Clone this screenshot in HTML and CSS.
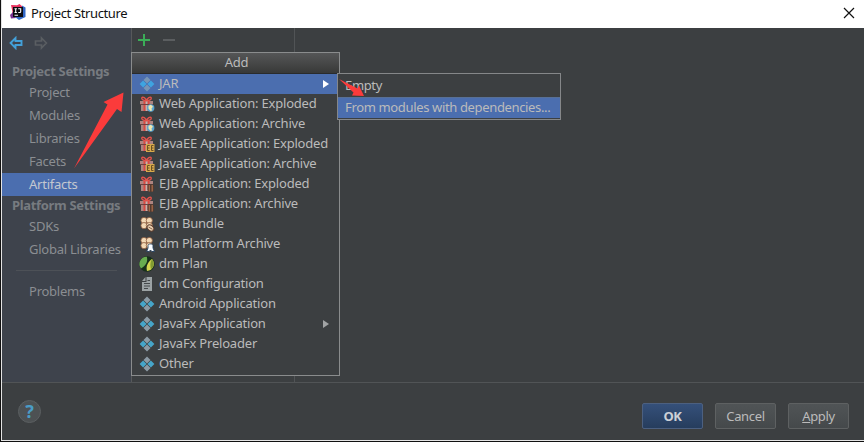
FILE: index.html
```html
<!DOCTYPE html>
<html lang="en">
<head>
<meta charset="utf-8">
<title>Project Structure</title>
<link rel="stylesheet" href="styles.css">
</head>
<body>
<svg width="0" height="0" class="defs">
  <defs>
    <symbol id="diamonds" viewBox="0 0 16 16">
      <path fill="#8c9ba5" d="M8 .6l3.500 3.500L8 7.600 4.500 4.100zM8 8.400l3.500 3.500L8 15.400l-3.500-3.500z"/>
      <path fill="#46a5c9" d="M4.100 4.500L7.600 8l-3.500 3.500L.6 8zM11.900 4.500L15.400 8l-3.500 3.500L8.400 8z"/>
    </symbol>
    <symbol id="diamonds-blue" viewBox="0 0 16 16">
      <path fill="#7795b5" d="M8 .6l3.500 3.500L8 7.600 4.500 4.100zM8 8.400l3.500 3.500L8 15.400l-3.500-3.500z"/>
      <path fill="#3fa4e0" d="M4.100 4.500L7.600 8l-3.500 3.500L.6 8zM11.900 4.500L15.400 8l-3.500 3.500L8.400 8z"/>
    </symbol>
    <symbol id="gift" viewBox="0 0 16 16">
      <path fill="#ad8480" d="M1 5h13v3H1zM2 9h11v6H2z"/>
      <path fill="#c4b3ad" d="M6.500 5h2v10h-2z"/>
      <path fill="#d84a43" d="M4.500 5h1.900v10H4.500zM8.700 5h1.900v10H8.700z"/>
      <path fill="none" stroke="#e0534c" stroke-width="1.400" d="M7.500 4.800C5 4.800 2 3.500 2.800 1.900S6.800 2 7.500 4.800C8.200 2 11.400 .2 12.200 1.900S10 4.800 7.500 4.800z"/>
      <path fill="#6e4241" d="M1 8h13v1H1z"/>
    </symbol>
    <symbol id="web" viewBox="0 0 16 16">
      <use href="#gift"/>
      <circle cx="11.700" cy="12" r="3.700" fill="#5aa5cf"/>
      <path fill="#efe6b0" d="M9.500 9.800l2.500-1 2 2-1.500 1.700.5 2-1.500.5-2-2.500z"/>
    </symbol>
    <symbol id="ee" viewBox="0 0 16 16">
      <use href="#gift"/>
      <path fill="#d7a94c" d="M7 8h8.500v8H7z"/>
      <path fill="none" stroke="#6b5125" d="M10.700 9.500H8.500v5h2.200M8.500 12h2M14.500 9.500h-2v5h2M12.500 12h2"/>
    </symbol>
    <symbol id="ejb" viewBox="0 0 16 16">
      <use href="#gift"/>
      <path fill="#513a30" d="M8.500 9.500L10 8h3.500L15 10v4.500L13.500 16H10l-1.500-2z"/>
      <path stroke="#a66c4b" stroke-width="1.300" d="M10.300 9v6.500M13.200 9v6.500"/>
    </symbol>
    <symbol id="bundle" viewBox="0 0 16 16">
      <g fill="#f3d9b6" stroke="#8d5c3d" stroke-width=".8">
        <circle cx="5" cy="4.500" r="3.100"/><circle cx="10.300" cy="4.500" r="3.100"/>
        <circle cx="5" cy="9.600" r="3.100"/><circle cx="10.300" cy="9.600" r="3.100"/>
      </g>
    </symbol>
    <symbol id="dm" viewBox="0 0 16 16">
      <use href="#bundle"/>
      <ellipse cx="11.500" cy="12" rx="3.700" ry="2.600" transform="rotate(38 11.500 12)" fill="#ead2b4" stroke="#59392a"/>
      <path fill="none" stroke="#865f45" d="M9.500 11l4 2.300"/>
    </symbol>
    <symbol id="dmplat" viewBox="0 0 16 16">
      <use href="#bundle"/>
      <path fill="#f8fbff" stroke="#233e5e" stroke-width=".9" d="M9 9.500C9 7.400 14 7.400 14 9.500v2.500l1.500 3.500h-2.700L11.500 14l-1.300 1.500H7.700L9 12z"/>
    </symbol>
    <symbol id="plan" viewBox="0 0 16 16">
      <circle cx="8" cy="8" r="7.700" fill="#17301a"/>
      <path fill="#68ad50" d="M7.800 .8A7.200 7.200 0 0 0 2 12.500C5.500 10.500 9.500 6.500 7.800 .8z"/>
      <path fill="#d5d650" d="M13 3C9.500 5.500 6.500 10 8 15A7.200 7.200 0 0 0 13 3z"/>
      <path fill="#829c32" d="M13 3C11 6 11 10 12 13.500A7.200 7.200 0 0 0 13 3z"/>
    </symbol>
    <symbol id="doc" viewBox="0 0 16 16">
      <path fill="#9ca3a5" d="M7.500 1H13v14H3V6h4.500zM6.500 1v4H3z"/>
      <path stroke="#44494b" stroke-width="1" d="M8.500 4.500H11M5 7.500h6M5 10h6M5 12.500h4"/>
    </symbol>
  </defs>
</svg>
<div class="window">
  <header class="titlebar">
    <svg class="logo" width="16" height="16" viewBox="0 0 16 16">
      <path fill="#e9315f" d="M1 1l6 .3L9.500 0 13 3l-6 9-6 2L2.500 8z"/>
      <path fill="#7b3192" d="M0 11l3-3 3 6-5 .5z"/>
      <path fill="#3268c7" d="M12 1.500l3.500 2V13L9 16l-4-3 7-3z"/>
      <path fill="#0b0b11" d="M3 3h10v10H3z"/>
      <path fill="none" stroke="#fff" stroke-width="1.100" d="M4.500 4.800h2.400M5.700 4.800v3.700M4.500 8.500h2.400M8.200 4.800h2.500v3q0 1-2.400.7M4.500 11.200H8"/>
    </svg>
    <h1>Project Structure</h1>
    <svg class="close" width="12" height="12" viewBox="0 0 12 12"><path stroke="#111" stroke-width="1.200" d="M1 1l10 10M11 1L1 11"/></svg>
  </header>
  <main class="content">
    <nav class="sidebar">
      <div class="history">
        <svg width="14" height="14" viewBox="0 0 14 14"><path fill="none" stroke="#43a0d9" stroke-width="1.900" d="M1.600 7L6.500 2v3H12.500v4H6.500v3z"/></svg>
        <svg width="14" height="14" viewBox="0 0 14 14"><path fill="none" stroke="#5a5e62" stroke-width="1.700" d="M12.400 7L7.500 2v3H1.500v4H7.500v3z"/></svg>
      </div>
      <h2>Project Settings</h2>
      <ul>
        <li>Project</li>
        <li>Modules</li>
        <li>Libraries</li>
        <li>Facets</li>
        <li class="selected">Artifacts</li>
      </ul>
      <h2>Platform Settings</h2>
      <ul>
        <li>SDKs</li>
        <li>Global Libraries</li>
      </ul>
      <hr>
      <ul><li>Problems</li></ul>
    </nav>
    <section class="artifacts">
      <div class="toolbar">
        <svg width="12" height="12" viewBox="0 0 12 12"><path stroke="#3bad57" stroke-width="2" d="M6 0v12M0 6h12"/></svg>
        <svg width="12" height="12" viewBox="0 0 12 12"><path stroke="#5b5e60" stroke-width="2" d="M0 6h12"/></svg>
      </div>
    </section>
    <section class="details"></section>
  </main>
  <footer class="footer">
    <div class="help">?</div>
    <div class="buttons">
      <button class="primary">OK</button>
      <button>Cancel</button>
      <button><u>A</u>pply</button>
    </div>
  </footer>
</div>

<div class="menu">
  <div class="menu-title">Add</div>
  <div class="item active"><svg><use href="#diamonds-blue"/></svg><span>JAR</span><i></i></div>
  <div class="item"><svg><use href="#web"/></svg><span>Web Application: Exploded</span></div>
  <div class="item"><svg><use href="#web"/></svg><span>Web Application: Archive</span></div>
  <div class="item"><svg><use href="#ee"/></svg><span>JavaEE Application: Exploded</span></div>
  <div class="item"><svg><use href="#ee"/></svg><span>JavaEE Application: Archive</span></div>
  <div class="item"><svg><use href="#ejb"/></svg><span>EJB Application: Exploded</span></div>
  <div class="item"><svg><use href="#ejb"/></svg><span>EJB Application: Archive</span></div>
  <div class="item"><svg><use href="#dm"/></svg><span>dm Bundle</span></div>
  <div class="item"><svg><use href="#dmplat"/></svg><span>dm Platform Archive</span></div>
  <div class="item"><svg><use href="#plan"/></svg><span>dm Plan</span></div>
  <div class="item"><svg><use href="#doc"/></svg><span>dm Configuration</span></div>
  <div class="item"><svg><use href="#diamonds"/></svg><span>Android Application</span></div>
  <div class="item"><svg><use href="#diamonds"/></svg><span>JavaFx Application</span><i></i></div>
  <div class="item"><svg><use href="#diamonds"/></svg><span>JavaFx Preloader</span></div>
  <div class="item"><svg><use href="#diamonds"/></svg><span>Other</span></div>
</div>
<div class="submenu">
  <div class="choice">Empty</div>
  <div class="choice chosen">From modules with dependencies...</div>
</div>
<svg class="arrows" width="864" height="442" viewBox="0 0 864 442">
  <path fill="#fb3b3b" d="M74 168.500L107.500 104.500l-4-2.500L123.500 92.500 121.500 112l-4.500-3z"/>
  <path fill="#fb3b3b" d="M339 79L357.500 88.500l1.500-3L364 96 352 95.500l1.500-3z"/>
</svg>
</body>
</html>
```

FILE: styles.css
```css
* { box-sizing: border-box; }
body {
  margin: 0;
  width: 864px;
  height: 442px;
  overflow: hidden;
  background: #111;
  color: #bbb;
  font: 13px/20px "Noto Sans", "Open Sans", sans-serif;
  letter-spacing: -0.2px;
}
.defs { position: absolute; }
.window {
  display: flex;
  flex-direction: column;
  width: 863px;
  height: 441px;
  margin-left: 1px;
  border-left: 1px solid #e4e4e4;
  border-bottom: 1px solid #e4e4e4;
  background: #3c3f41;
}
.titlebar {
  display: flex;
  align-items: center;
  flex: 0 0 28px;
  padding: 0 9px 3px 8px;
  background: #fff;
  color: #111;
}
.titlebar h1 { margin: 0 auto 0 5px; font-size: 13px; font-weight: 400; letter-spacing: -0.37px; }
.logo { margin-top: -2px; }
.content { display: flex; flex: 0 0 354px; }
.sidebar {
  width: 129px;
  background: #3e434c;
  color: #8b8e92;
}
.history { display: flex; gap: 11px; padding: 8px 0 0 7px; height: 34px; }
h2 {
  margin: 0;
  padding-left: 10px;
  font-size: 13px;
  font-weight: 700;
  line-height: 19px;
  letter-spacing: -0.32px;
  color: #777b80;
  white-space: nowrap;
}
ul { margin: 0; padding: 0; list-style: none; }
li { height: 23px; line-height: 23px; padding-left: 27px; white-space: nowrap; letter-spacing: -0.24px; }
li.selected { background: #4b6eaf; color: #c3c8d0; }
hr { margin: 9px 14px 9px; border: 0; border-top: 1px solid #4d5157; }
.artifacts {
  width: 164px;
  border-left: 1px solid #57595b;
  border-right: 1px solid #515456;
}
.toolbar { display: flex; gap: 13px; padding: 6px; }
.details { flex: 1; }
.footer {
  display: flex;
  justify-content: space-between;
  align-items: flex-start;
  flex: 1;
  padding: 17px 15px 0 16px;
  border-top: 1px solid #515456;
}
.help {
  width: 23px;
  height: 23px;
  border-radius: 50%;
  border: 1px solid #5b5f61;
  background: #4d5153;
  color: #4a9cc6;
  font-weight: 700;
  font-size: 18px;
  line-height: 21px;
  text-align: center;
}
.buttons { display: flex; gap: 12px; padding-top: 3px; }
button {
  width: 61px;
  height: 26px;
  padding: 0;
  border: 1px solid #5e6162;
  border-radius: 2px;
  background: linear-gradient(#505456, #45494b);
  color: #bbb;
  font: inherit;
  letter-spacing: -0.35px;
}
button.primary {
  border-color: #4c6080;
  background: linear-gradient(#35507a, #263d5d);
  color: #ccd0d6;
  font-weight: 700;
}
.menu {
  position: absolute;
  left: 131px;
  top: 52px;
  width: 209px;
  height: 324px;
  border: 1px solid #8a8c8d;
  background: #3c3f41;
}
.menu-title {
  height: 21px;
  padding-left: 2px;
  border-bottom: 1px solid #292b2c;
  background: linear-gradient(#555657, #383938);
  line-height: 18px;
  text-align: center;
}
.item {
  display: flex;
  align-items: center;
  height: 20px;
  padding: 0 10px 0 7px;
  line-height: 18px;
  white-space: nowrap;
}
.item span { height: 20px; }
.item svg { width: 16px; height: 16px; margin-right: 4px; flex: none; }
.item i {
  margin-left: auto;
  border-left: 6px solid #a1a3a4;
  border-top: 4px solid transparent;
  border-bottom: 4px solid transparent;
}
.active { background: #4b6eaf; }
.active i { border-left-color: #fff; }
.submenu {
  position: absolute;
  left: 337px;
  top: 73px;
  width: 224px;
  height: 47px;
  border: 1px solid #858789;
  background: #3c3f41;
}
.choice { height: 23px; line-height: 22px; padding-left: 7px; white-space: nowrap; letter-spacing: -0.35px; }
.chosen { height: 21px; line-height: 18px; background: #4b6eaf; border-top: 1px solid #587096; }
.arrows { position: absolute; left: 0; top: 0; pointer-events: none; }
```
